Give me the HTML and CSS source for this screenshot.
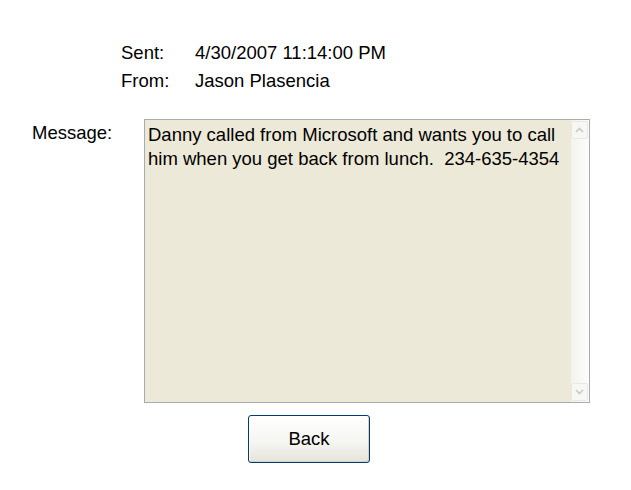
FILE: index.html
```html
<!DOCTYPE html>
<html>
<head>
<meta charset="utf-8">
<link rel="stylesheet" href="styles.css">
</head>
<body>
<div class="page">
  <div class="meta">
    <div class="meta-row"><span class="meta-label">Sent:</span><span class="meta-value">4/30/2007 11:14:00 PM</span></div>
    <div class="meta-row"><span class="meta-label">From:</span><span class="meta-value">Jason Plasencia</span></div>
  </div>
  <div class="message-row">
    <div class="message-label">Message:</div>
    <div class="message-box">
      <div class="message-text">Danny called from Microsoft and wants you to call him when you get back from lunch.&nbsp; 234-635-4354</div>
      <div class="scrollbar">
        <div class="scroll-btn">
          <svg width="9" height="6" viewBox="0 0 9 6"><path d="M1 5 L4.5 1.5 L8 5" fill="none" stroke="#c9c9c9" stroke-width="1.6"/></svg>
        </div>
        <div class="scroll-track"></div>
        <div class="scroll-btn">
          <svg width="9" height="6" viewBox="0 0 9 6"><path d="M1 1 L4.5 4.5 L8 1" fill="none" stroke="#c9c9c9" stroke-width="1.6"/></svg>
        </div>
      </div>
    </div>
  </div>
  <div class="actions">
    <button class="btn">Back</button>
  </div>
</div>
</body>
</html>
```
FILE: styles.css
```css
html, body {
  margin: 0;
  padding: 0;
  background: #ffffff;
}
body {
  font-family: "Liberation Sans", Arial, sans-serif;
  font-size: 18.5px;
  color: #000;
}
.page {
  padding-top: 43px;
}
.meta {
  padding-left: 121px;
  display: flex;
  flex-direction: column;
  gap: 8px;
}
.meta-row {
  display: flex;
  height: 20px;
  line-height: 20px;
}
.meta-label {
  width: 74px;
}
.message-row {
  display: flex;
  margin-top: 28px;
}
.message-label {
  width: 112px;
  padding-left: 32px;
  padding-top: 4px;
  line-height: 20px;
}
.message-box {
  width: 444px;
  height: 282px;
  border: 1px solid #a5acb2;
  background: #ece9d8;
  display: flex;
}
.message-text {
  flex: 1;
  padding: 3px 0 0 3px;
  line-height: 24px;
}
.scrollbar {
  width: 17px;
  display: flex;
  flex-direction: column;
  background: linear-gradient(to right, #f4f3ee, #fcfcfa);
  padding: 1px 1px 1px 0;
}
.scroll-btn {
  height: 16px;
  border: 1px solid #e8e8e4;
  border-radius: 2px;
  background: #f7f7f4;
  display: flex;
  align-items: center;
  justify-content: center;
}
.scroll-track {
  flex: 1;
}
.actions {
  padding-left: 248px;
  margin-top: 12px;
}
.btn {
  width: 122px;
  height: 48px;
  font-family: "Liberation Sans", Arial, sans-serif;
  font-size: 18.5px;
  color: #000;
  border: 1px solid #003c74;
  border-radius: 3px;
  background: linear-gradient(to bottom, #ffffff 0%, #f4f4f0 60%, #e6e3da 100%);
  box-shadow: inset -1px -1px 0 #d6d0c5, inset 1px 1px 0 #fff;
  padding: 0;
}
```
